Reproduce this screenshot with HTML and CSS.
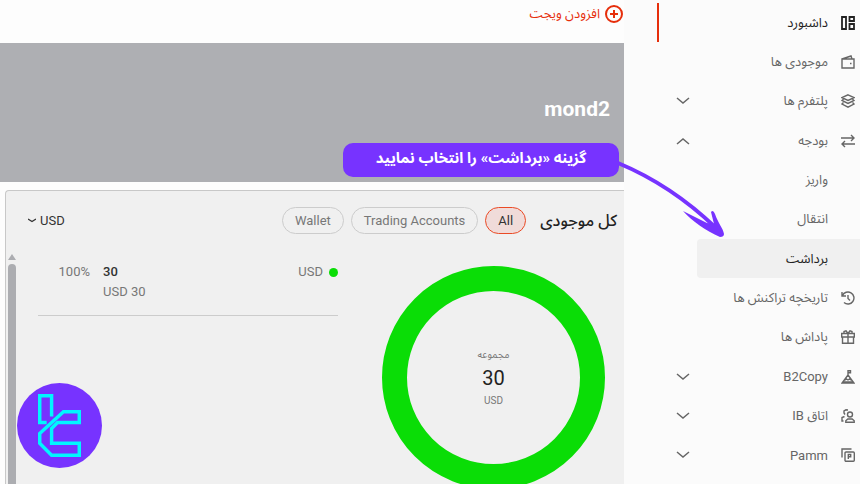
FILE: index.html
```html
<!DOCTYPE html>
<html lang="fa" dir="rtl">
<head>
    <meta charset="UTF-8">
    <meta name="viewport" content="width=device-width, initial-scale=1.0">
    <title>داشبورد</title>
    <link rel="stylesheet" href="styles.css">
</head>
<body>
    <div class="app">
        <nav class="sidebar">
            <a href="#" class="item current">
                <svg class="icon" viewBox="0 0 14 14"><path d="M1 1h4v12H1zM8.500 1H13v4H8.500zM8.500 8H13v5H8.500z" stroke-width="1.8"/></svg>
                <span>داشبورد</span>
            </a>
            <a href="#" class="item">
                <svg class="icon" viewBox="0 0 14 14"><path d="M1 4h12v9H1zM1 4l9-3 1 3M9 8.500h1.500"/></svg>
                <span>موجودی ها</span>
            </a>
            <a href="#" class="item">
                <svg class="icon" viewBox="0 0 14 14"><path d="M7 .8l6 2.800-6 2.800-6-2.800zM2.500 5.200L1 6.500l6 3 6-3-1.500-1.300M2.500 8.500L1 10l6 3.200L13 10l-1.500-1.500"/></svg>
                <span>پلتفرم ها</span>
                <svg class="chevron" viewBox="0 0 14 8"><path d="M1 1l6 5 6-5"/></svg>
            </a>
            <a href="#" class="item">
                <svg class="icon" viewBox="0 0 14 14"><path d="M0 4h13M10 1l3 3-3 3M14 10H1M4 7l-3 3 3 3"/></svg>
                <span>بودجه</span>
                <svg class="chevron" viewBox="0 0 14 8"><path d="M1 7l6-5 6 5"/></svg>
            </a>
            <a href="#" class="subitem">واریز</a>
            <a href="#" class="subitem">انتقال</a>
            <a href="#" class="subitem selected">برداشت</a>
            <a href="#" class="item">
                <svg class="icon" viewBox="0 0 14 14"><path d="M1 1v4h4M1.500 4.500A6 6 0 1 1 3 11.500M7 4v3.500l2 2"/></svg>
                <span>تاریخچه تراکنش ها</span>
            </a>
            <a href="#" class="item">
                <svg class="icon" viewBox="0 0 14 14"><path d="M.7 3.500h12.600V7H.7zM1.500 7v6.300h11V7M7 3.500v9.800M7 3.500L5 .8 3 1.500v2M7 3.500L9 .8l2 .7v2"/></svg>
                <span>پاداش ها</span>
            </a>
            <a href="#" class="item">
                <svg class="icon" viewBox="0 0 14 14"><path d="M7 5L1 13h12zM7 5V.7h2.500v2H7M3.500 10l2-1 1.500 1 1.500-1 2 1M2 12h10"/></svg>
                <span>B2Copy</span>
                <svg class="chevron" viewBox="0 0 14 8"><path d="M1 1l6 5 6-5"/></svg>
            </a>
            <a href="#" class="item">
                <svg class="icon" viewBox="0 0 14 14"><circle cx="9" cy="5.500" r="2.500"/><path d="M4.800 13.200v-1.500l2-1.700h4.400l2 1.700v1.500zM7 1L5 .8 3 2v2l1 1.500M3.500 7.500L1 8.500V12h1.500"/></svg>
                <span>اتاق IB</span>
                <svg class="chevron" viewBox="0 0 14 8"><path d="M1 1l6 5 6-5"/></svg>
            </a>
            <a href="#" class="item">
                <svg class="icon" viewBox="0 0 14 14"><path d="M1 9.500V1h9.500"/><rect x="4" y="4" width="9.300" height="9.300" rx="1"/><path d="M7.300 11V6.500h2.400v2.300H7.300"/></svg>
                <span>Pamm</span>
                <svg class="chevron" viewBox="0 0 14 8"><path d="M1 1l6 5 6-5"/></svg>
            </a>
        </nav>

        <main class="content">
            <div class="toolbar">
                <button type="button" class="add-widget">
                    <svg viewBox="0 0 18 18"><circle cx="9" cy="9" r="8"/><path d="M9 5v8M5 9h8"/></svg>
                    افزودن ویجت
                </button>
            </div>
            <header class="banner">
                <h1>mond2</h1>
            </header>
            <section class="card">
                <div class="card-head">
                    <h2>کل موجودی</h2>
                    <div class="filters">
                        <button type="button" class="pill active">All</button>
                        <button type="button" class="pill">Trading Accounts</button>
                        <button type="button" class="pill">Wallet</button>
                    </div>
                    <button type="button" class="currency">
                        USD
                        <svg viewBox="0 0 8 5"><path d="M0 1l4 2.500L8 1"/></svg>
                    </button>
                </div>
                <div class="card-body">
                    <div class="donut">
                        <span class="small">مجموعه</span>
                        <strong>30</strong>
                        <span class="small">USD</span>
                    </div>
                    <ul class="assets">
                        <li>
                            <span class="dot"></span>
                            <span class="name">USD</span>
                            <div class="amount">
                                <b>30</b>
                                <span dir="ltr">USD 30</span>
                            </div>
                            <span class="percent" dir="ltr">100%</span>
                        </li>
                    </ul>
                    <div class="scrollbar">
                        <span class="arrow-up"></span>
                        <span class="thumb"></span>
                    </div>
                </div>
            </section>
        </main>

        <svg class="pointer" viewBox="0 0 110 80">
            <path class="line" d="M2 5C38 20 72 43 100 70"/>
            <path class="head" d="M67 53L91 65L98 66L95 54Q97 51 99 56C102 65 107 70 108 76Q108 79 104 79C90 73 76 63 67 53z"/>
        </svg>
        <div class="callout">گزینه «برداشت» را انتخاب نمایید</div>

        <svg class="logo" viewBox="0 0 86 86">
            <circle cx="43" cy="43" r="43"/>
            <path d="M30 40h-7V13h12v21M23 51L47 29h16v11H41l-6 6v15h28v12H35L23 61z"/>
        </svg>
    </div>
</body>
</html>
```
FILE: styles.css
```css
* {
    box-sizing: border-box;
}
body {
    margin: 0;
    background-color: #fdfdfd;
    color: #222;
    font-family: Roboto, "Noto Sans Arabic", "DejaVu Sans", sans-serif;
    font-size: 13px;
}
button {
    font: inherit;
    background: none;
    border: none;
    padding: 0;
    cursor: pointer;
}
svg {
    fill: none;
    stroke: currentColor;
    flex: none;
}
.app {
    position: relative;
    display: flex;
    height: 100vh;
    overflow: hidden;
}

/* sidebar */
.sidebar {
    width: 236px;
    flex: none;
    display: grid;
    grid-auto-rows: 1fr;
    padding: 3px 0 9px;
    background-color: #fbfbfb;
}
.item, .subitem {
    display: flex;
    align-items: center;
    color: #666;
    text-decoration: none;
}
.item {
    gap: 13px;
    margin-left: 33px;
    padding: 0 5px 0 17px;
    border-left: 2px solid transparent;
}
.subitem {
    margin-left: 73px;
    padding-right: 32px;
    border-radius: 4px 0 0 4px;
}
.current {
    border-left-color: #e62e0b;
    color: #222;
}
.selected {
    background-color: #f0f0f0;
    color: #222;
}
.icon {
    width: 14px;
    height: 14px;
    stroke-width: 1.4;
}
.chevron {
    width: 14px;
    height: 8px;
    margin-right: auto;
    stroke-width: 1.5;
}

/* content */
.content {
    flex: 1;
    min-width: 0;
    display: flex;
    flex-direction: column;
}
.toolbar {
    height: 43px;
    padding-right: 1px;
    flex: none;
}
.add-widget {
    display: flex;
    align-items: center;
    gap: 5px;
    color: #e62e0b;
}
.add-widget svg {
    width: 18px;
    height: 18px;
    stroke-width: 2;
}
.banner {
    height: 139px;
    flex: none;
    display: flex;
    align-items: center;
    padding: 0 14px 8px;
    background-color: #aeafb3;
    color: white;
}
.banner h1 {
    margin: 0;
    font-size: 21px;
}
.card {
    flex: 1;
    display: flex;
    flex-direction: column;
    margin: 8px 0 0 5px;
    border: 1px solid #c8c8c8;
    border-width: 1px 0 0 1px;
    border-radius: 4px 0 0 0;
    background-color: #f0f0f0;
}
.card-head {
    display: flex;
    align-items: center;
    height: 59px;
    padding: 0 7px 0 22px;
}
.card-head h2 {
    margin: 0 0 0 14px;
    font-size: 16px;
    font-weight: 500;
}
.filters {
    display: flex;
    gap: 7px;
}
.pill {
    height: 27px;
    padding: 0 12px;
    border: 1px solid #ccc;
    border-radius: 14px;
    color: #777;
}
.pill.active {
    border-color: #ea4a25;
    background-color: #f0dbd9;
    color: #333;
}
.currency {
    display: flex;
    align-items: center;
    gap: 4px;
    margin-right: auto;
    color: #333;
}
.currency svg {
    width: 8px;
    height: 5px;
    stroke-width: 1.3;
}
.card-body {
    flex: 1;
    display: flex;
    align-items: flex-start;
}
.donut {
    width: 223px;
    height: 223px;
    flex: none;
    display: flex;
    flex-direction: column;
    align-items: center;
    justify-content: center;
    gap: 4px;
    margin: 16px 19px 0 44px;
    border: 25px solid #0add06;
    border-radius: 50%;
}
.donut strong {
    font-size: 20px;
    font-weight: 400;
    line-height: 24px;
}
.small {
    font-size: 10px;
    line-height: 14px;
    color: #777;
}
.assets {
    flex: 1;
    margin: 12px 0 0 22px;
    padding: 0;
    list-style: none;
}
.assets li {
    display: flex;
    align-items: flex-start;
    height: 54px;
    border-bottom: 1px solid #ccc;
    line-height: 20px;
    color: #777;
}
.dot {
    width: 9px;
    height: 9px;
    margin: 6px 0 0 6px;
    border-radius: 50%;
    background-color: #0add06;
}
.amount {
    display: flex;
    flex-direction: column;
    align-items: flex-end;
    margin-right: auto;
}
.amount b {
    font-weight: 500;
    color: #333;
}
.percent {
    width: 52px;
    margin: 0 13px 0 0;
    text-align: right;
}
.scrollbar {
    align-self: stretch;
    width: 8px;
    display: flex;
    flex-direction: column;
    gap: 4px;
    margin: 4px 0 0 2px;
}
.arrow-up {
    border: 4px solid transparent;
    border-top-width: 0;
    border-bottom: 6px solid #acadb1;
}
.thumb {
    flex: 1;
    border-radius: 4px 4px 0 0;
    background-color: #acadb1;
}

/* hint over the page */
.callout {
    position: absolute;
    top: 143px;
    right: 241px;
    width: 276px;
    height: 34px;
    border-radius: 10px;
    background-color: #7733ff;
    color: white;
    font-size: 15px;
    font-weight: 700;
    line-height: 30px;
    text-align: center;
    white-space: nowrap;
}
.pointer {
    position: absolute;
    top: 158px;
    right: 134px;
    width: 110px;
    height: 80px;
    color: #7733ff;
}
.pointer .line {
    stroke-width: 4;
}
.pointer .head {
    fill: currentColor;
    stroke: none;
}
.logo {
    position: absolute;
    left: 17px;
    bottom: 16px;
    width: 85px;
    height: 85px;
    color: #00f6ff;
    stroke-width: 3.500;
}
.logo circle {
    fill: #7733ff;
    stroke: none;
}
```
